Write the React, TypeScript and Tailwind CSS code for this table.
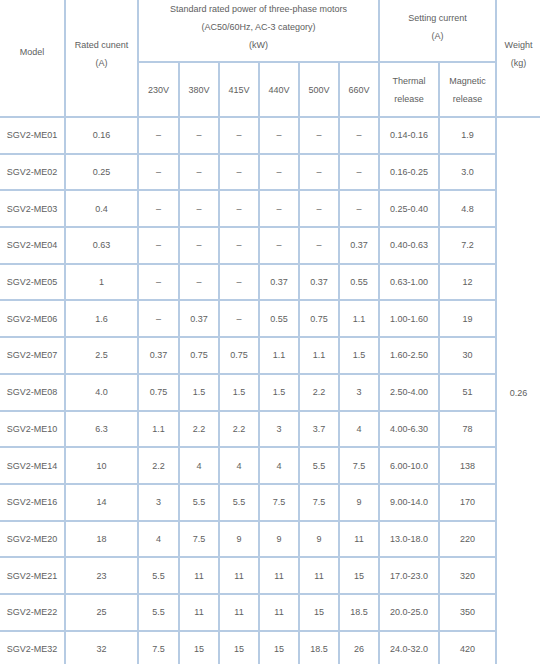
const rows: [string, string, string[], string, string][] = [
  ['SGV2-ME01', '0.16', ['–', '–', '–', '–', '–', '–'], '0.14-0.16', '1.9'],
  ['SGV2-ME02', '0.25', ['–', '–', '–', '–', '–', '–'], '0.16-0.25', '3.0'],
  ['SGV2-ME03', '0.4', ['–', '–', '–', '–', '–', '–'], '0.25-0.40', '4.8'],
  ['SGV2-ME04', '0.63', ['–', '–', '–', '–', '–', '0.37'], '0.40-0.63', '7.2'],
  ['SGV2-ME05', '1', ['–', '–', '–', '0.37', '0.37', '0.55'], '0.63-1.00', '12'],
  ['SGV2-ME06', '1.6', ['–', '0.37', '–', '0.55', '0.75', '1.1'], '1.00-1.60', '19'],
  ['SGV2-ME07', '2.5', ['0.37', '0.75', '0.75', '1.1', '1.1', '1.5'], '1.60-2.50', '30'],
  ['SGV2-ME08', '4.0', ['0.75', '1.5', '1.5', '1.5', '2.2', '3'], '2.50-4.00', '51'],
  ['SGV2-ME10', '6.3', ['1.1', '2.2', '2.2', '3', '3.7', '4'], '4.00-6.30', '78'],
  ['SGV2-ME14', '10', ['2.2', '4', '4', '4', '5.5', '7.5'], '6.00-10.0', '138'],
  ['SGV2-ME16', '14', ['3', '5.5', '5.5', '7.5', '7.5', '9'], '9.00-14.0', '170'],
  ['SGV2-ME20', '18', ['4', '7.5', '9', '9', '9', '11'], '13.0-18.0', '220'],
  ['SGV2-ME21', '23', ['5.5', '11', '11', '11', '11', '15'], '17.0-23.0', '320'],
  ['SGV2-ME22', '25', ['5.5', '11', '11', '11', '15', '18.5'], '20.0-25.0', '350'],
  ['SGV2-ME32', '32', ['7.5', '15', '15', '15', '18.5', '26'], '24.0-32.0', '420'],
];

const volts = ['230V', '380V', '415V', '440V', '500V', '660V'];

const cell = 'bg-white flex items-center justify-center text-center';

export default function App() {
  return (
    <div className="w-[540px] h-[664px] overflow-hidden bg-white font-['Liberation_Sans',Arial,sans-serif] text-[9px] leading-[18px] text-[#5e5e5e]">
      <div className="grid grid-cols-[64px_71px_39px_38px_38px_38px_38px_38px_58px_55px_43px] grid-rows-[61px_53px_repeat(15,34.7px)] gap-[2px] bg-[#b6cbe3]">
        {/* header */}
        <div className={`${cell} row-span-2 pb-[12px]`}>Model</div>
        <div className={`${cell} row-span-2 flex-col pb-[9px]`}>
          <span>Rated cunent</span>
          <span>(A)</span>
        </div>
        <div className={`${cell} col-span-6 flex-col pb-[8px]`}>
          <span>Standard rated power of three-phase motors</span>
          <span>(AC50/60Hz, AC-3 category)</span>
          <span>(kW)</span>
        </div>
        <div className={`${cell} col-span-2 flex-col pb-[8px]`}>
          <span>Setting current</span>
          <span>(A)</span>
        </div>
        <div className={`${cell} row-span-2 flex-col pb-[8px]`}>
          <span>Weight</span>
          <span>(kg)</span>
        </div>
        {volts.map((v) => (
          <div key={v} className={cell}>{v}</div>
        ))}
        <div className={`${cell} flex-col`}>
          <span>Thermal</span>
          <span>release</span>
        </div>
        <div className={`${cell} flex-col`}>
          <span>Magnetic</span>
          <span>release</span>
        </div>

        {/* body */}
        {rows.map((r, i) => (
          <div key={r[0]} className="contents">
            <div className={cell}>{r[0]}</div>
            <div className={cell}>{r[1]}</div>
            {r[2].map((p, j) => (
              <div key={j} className={cell}>{p}</div>
            ))}
            <div className={cell}>{r[3]}</div>
            <div className={cell}>{r[4]}</div>
            {i === 0 && <div className={`${cell} row-span-15 pt-[2px]`}>0.26</div>}
          </div>
        ))}
      </div>
    </div>
  );
}
